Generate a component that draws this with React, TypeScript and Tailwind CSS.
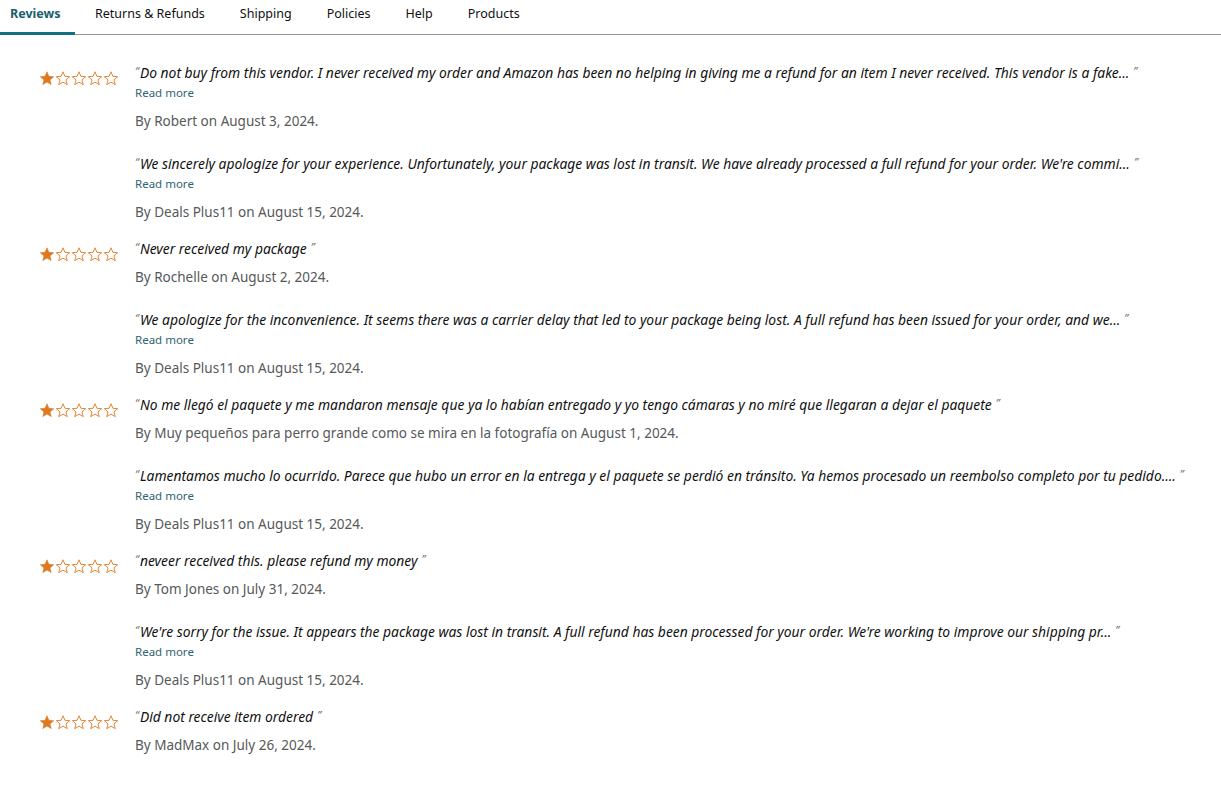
import React from 'react';

type Reply = { text: string; by: string; date: string; more?: boolean };
type Review = { text: string; by: string; date: string; more?: boolean; reply?: Reply };

const tabs = ['Reviews', 'Returns & Refunds', 'Shipping', 'Policies', 'Help', 'Products'];

const reviews: Review[] = [
  {
    text: 'Do not buy from this vendor. I never received my order and Amazon has been no helping in giving me a refund for an item I never received. This vendor is a fake...',
    by: 'Robert',
    date: 'August 3, 2024',
    more: true,
    reply: {
      text: "We sincerely apologize for your experience. Unfortunately, your package was lost in transit. We have already processed a full refund for your order. We're commi...",
      by: 'Deals Plus11',
      date: 'August 15, 2024',
      more: true,
    },
  },
  {
    text: 'Never received my package',
    by: 'Rochelle',
    date: 'August 2, 2024',
    reply: {
      text: 'We apologize for the inconvenience. It seems there was a carrier delay that led to your package being lost. A full refund has been issued for your order, and we...',
      by: 'Deals Plus11',
      date: 'August 15, 2024',
      more: true,
    },
  },
  {
    text: 'No me llegó el paquete y me mandaron mensaje que ya lo habían entregado y yo tengo cámaras y no miré que llegaran a dejar el paquete',
    by: 'Muy pequeños para perro grande como se mira en la fotografía',
    date: 'August 1, 2024',
    reply: {
      text: 'Lamentamos mucho lo ocurrido. Parece que hubo un error en la entrega y el paquete se perdió en tránsito. Ya hemos procesado un reembolso completo por tu pedido....',
      by: 'Deals Plus11',
      date: 'August 15, 2024',
      more: true,
    },
  },
  {
    text: 'neveer received this. please refund my money',
    by: 'Tom Jones',
    date: 'July 31, 2024',
    reply: {
      text: "We're sorry for the issue. It appears the package was lost in transit. A full refund has been processed for your order. We're working to improve our shipping pr...",
      by: 'Deals Plus11',
      date: 'August 15, 2024',
      more: true,
    },
  },
  {
    text: 'Did not receive item ordered',
    by: 'MadMax',
    date: 'July 26, 2024',
  },
];

const StarPath = 'M7.5 0.8 L9.4 5.3 L14.2 5.7 L10.5 8.9 L11.7 13.6 L7.5 11.1 L3.3 13.6 L4.5 8.9 L0.8 5.7 L5.6 5.3 Z';

function Stars({ rating }: { rating: number }) {
  return (
    <div className="flex mt-2">
      {[0, 1, 2, 3, 4].map((i) => (
        <svg key={i} width="16" height="14.5" viewBox="0 0 15 14.5" className="shrink-0">
          <path
            d={StarPath}
            fill={i < rating ? '#de7921' : 'none'}
            stroke="#de7921"
            strokeWidth={i < rating ? 0.6 : 0.9}
            strokeLinejoin="round"
          />
        </svg>
      ))}
    </div>
  );
}

function Quote({ text }: { text: string }) {
  return (
    <p className="italic text-[13.85px] leading-[20px] h-[20px] text-[#0f1111] whitespace-nowrap">
      <span className="text-[11px] leading-[0] text-[#6f7373] align-[3px] mr-[1px]">“</span>
      {text}
      <span className="text-[11px] leading-[0] text-[#6f7373] align-[3px] ml-[4px]">”</span>
    </p>
  );
}

function Entry({ text, by, date, more }: Reply) {
  return (
    <div>
      <Quote text={text} />
      {more && <p className="text-[11.5px] leading-[20px] text-[#2f6472]">Read more</p>}
      <p className="mt-2 text-[13.5px] leading-[20px] text-[#565959]">
        By {by} on {date}.
      </p>
    </div>
  );
}

export default function App() {
  return (
    <div className="min-h-[795px] bg-white font-['Noto_Sans','Open_Sans',sans-serif] text-[#0f1111]">
      <div className="flex h-[34px] border-b border-[#949494] box-content">
        {tabs.map((t, i) =>
          i === 0 ? (
            <div
              key={t}
              className="w-[75px] h-[35px] -mb-px pl-[10px] pt-[5px] leading-[18px] text-[12.5px] font-bold text-[#17606e] border-b-[3px] border-[#127083]"
            >
              {t}
            </div>
          ) : (
            <div
              key={t}
              className={`pt-[5px] leading-[18px] text-[12.5px] text-[#0f1111] ${i === 1 ? 'ml-[20px]' : 'ml-[35px]'}`}
            >
              {t}
            </div>
          )
        )}
      </div>

      <div className="pt-[28px] pl-[39px]">
        {reviews.map((r, i) => (
          <div key={i} className={`flex ${i > 0 ? 'mt-[17px]' : ''}`}>
            <div className="w-[96px] shrink-0">
              <Stars rating={1} />
            </div>
            <div className="flex flex-col">
              <Entry text={r.text} by={r.by} date={r.date} more={r.more} />
              {r.reply && (
                <div className="mt-[23px]">
                  <Entry {...r.reply} />
                </div>
              )}
            </div>
          </div>
        ))}
      </div>
    </div>
  );
}
